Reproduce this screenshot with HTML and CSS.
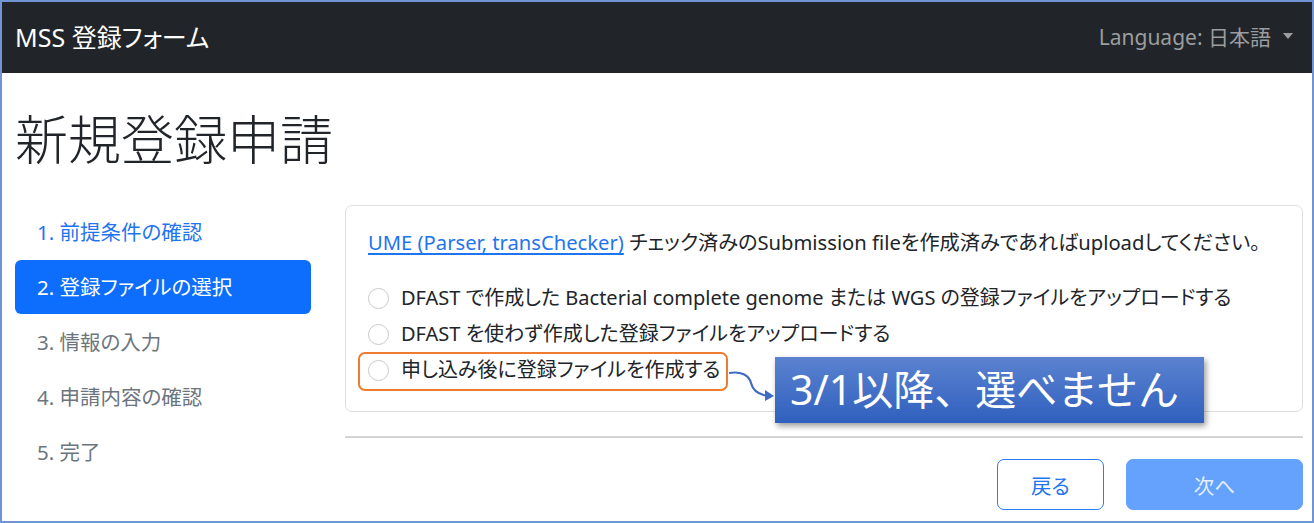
FILE: index.html
```html
<!DOCTYPE html>
<html lang="ja">
<head>
<meta charset="utf-8">
<title>MSS 登録フォーム</title>
<link rel="stylesheet" href="styles.css">
</head>
<body>
<div class="frame">
  <nav class="navbar">
    <span class="brand">MSS 登録フォーム</span>
    <span class="lang">Language: 日本語<span class="caret"></span></span>
  </nav>
  <main class="container">
    <h1 class="title">新規登録申請</h1>
    <div class="layout">
      <ul class="steps">
        <li class="step link">1. 前提条件の確認</li>
        <li class="step active">2. 登録ファイルの選択</li>
        <li class="step muted">3. 情報の入力</li>
        <li class="step muted">4. 申請内容の確認</li>
        <li class="step muted">5. 完了</li>
      </ul>
      <section class="content">
        <div class="card">
          <p class="intro"><a class="ume" href="#">UME (Parser, transChecker)</a> チェック済みのSubmission fileを作成済みであればuploadしてください。</p>
          <div class="options">
            <label class="opt"><span class="radio"></span>DFAST で作成した Bacterial complete genome または WGS の登録ファイルをアップロードする</label>
            <label class="opt"><span class="radio"></span>DFAST を使わず作成した登録ファイルをアップロードする</label>
            <label class="opt"><span class="radio"></span>申し込み後に登録ファイルを作成する</label>
          </div>
          <div class="mark"></div>
          <svg class="arrow" width="52" height="42" viewBox="0 0 52 42">
            <path d="M2 8 C 14 6, 22 10, 24 18 C 26 26, 32 30, 42 31" fill="none" stroke="#3f6cc0" stroke-width="2.2"/>
            <path d="M38 25 L47 31 L38 36 Z" fill="#3f6cc0"/>
          </svg>
          <div class="callout">3/1以降、選べません</div>
        </div>
        <hr class="divider">
        <div class="actions">
          <button class="btn btn-back" type="button">戻る</button>
          <button class="btn btn-next" type="button" disabled>次へ</button>
        </div>
      </section>
    </div>
  </main>
</div>
</body>
</html>
```

FILE: styles.css
```css
* { box-sizing: border-box; }
html, body { margin: 0; padding: 0; background: #fff; }
body {
  font-family: "Noto Sans", "Noto Sans CJK JP", sans-serif;
  font-size: 21.3px;
  line-height: 1.5;
  color: #212529;
  font-feature-settings: "palt";
}
.frame {
  width: 1314px;
  height: 523px;
  border: 2px solid #7094d4;
  overflow: hidden;
}
.navbar {
  height: 71px;
  background: #212529;
  display: flex;
  align-items: center;
  justify-content: space-between;
  padding: 0 19px 0 13px;
}
.brand {
  color: #fff;
  font-size: 25px;
}
.lang {
  color: #9b9d9f;
  font-size: 21px;
  display: flex;
  align-items: center;
}
.caret {
  display: inline-block;
  margin-left: 12px;
  width: 0;
  height: 0;
  border-left: 5.5px solid transparent;
  border-right: 5.5px solid transparent;
  border-top: 6px solid #9b9d9f;
  margin-top: -4px;
}
.container {
  padding: 0 9px 0 13px;
}
.title {
  margin: 35px 0 33px;
  font-size: 53px;
  line-height: 64px;
  font-weight: 300;
  color: #212529;
}
.layout {
  display: grid;
  grid-template-columns: 296px 1fr;
  column-gap: 34px;
}
.steps {
  list-style: none;
  margin: 0;
  padding: 0;
}
.step {
  height: 54px;
  margin-bottom: 1px;
  padding: 0 22px;
  display: flex;
  align-items: center;
  border-radius: 6px;
  font-size: 20.5px;
}
.step.link { color: #1f74f0; }
.step.active { background: #0d6efd; color: #fff; }
.step.muted { color: #6c757d; }
.content { display: flex; flex-direction: column; }
.card {
  position: relative;
  border: 1px solid #dcdfe2;
  border-radius: 7px;
  padding: 21px 22px 25px;
}
.intro {
  margin: 0 0 25px;
  font-size: 20.2px;
  white-space: nowrap;
}
.ume { color: #1f74f0; text-decoration: underline; text-underline-offset: 3px; }
.options { display: flex; flex-direction: column; gap: 4px; }
.opt {
  display: flex;
  align-items: center;
  height: 32px;
  font-size: 20px;
  white-space: nowrap;
}
.radio {
  width: 21px;
  height: 21px;
  border: 1px solid #c5c9cd;
  border-radius: 50%;
  margin-right: 12px;
  flex: none;
}
.mark {
  position: absolute;
  left: 12px;
  top: 146px;
  width: 370px;
  height: 39px;
  border: 2.5px solid #ee7b30;
  border-radius: 7px;
}
.arrow {
  position: absolute;
  left: 381px;
  top: 159px;
}
.callout {
  position: absolute;
  left: 429px;
  top: 151px;
  width: 429px;
  height: 66px;
  background: linear-gradient(#5b82d0, #2f60be);
  color: #fff;
  font-size: 41px;
  line-height: 64px;
  padding-left: 15px;
  box-shadow: 2px 3px 6px rgba(0, 0, 0, 0.4);
  white-space: nowrap;
  font-feature-settings: normal;
}
.divider {
  margin: 24px 0 21px;
  border: 0;
  border-top: 2px solid #d4d4d4;
}
.actions {
  display: flex;
  justify-content: flex-end;
  gap: 22px;
}
.btn {
  height: 51px;
  border-radius: 7px;
  font-family: inherit;
  font-size: 20.5px;
  font-feature-settings: "palt";
}
.btn-back {
  width: 107px;
  background: #fff;
  color: #1f74f0;
  border: 1.5px solid #2b7cf5;
}
.btn-next {
  width: 177px;
  background: #64a2fe;
  color: #e6efff;
  border: 1px solid #64a2fe;
}
```
